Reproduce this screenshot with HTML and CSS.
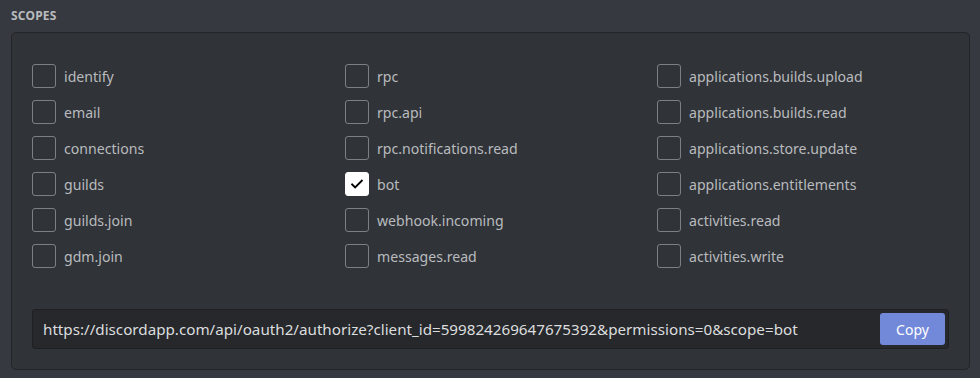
FILE: index.html
```html
<!DOCTYPE html>
<html lang="en">
<head>
    <meta charset="UTF-8">
    <title>OAuth2 Scopes</title>
    <link rel="stylesheet" href="styles.css">
</head>
<body>
    <div class="section">
        <h5 class="section-title">Scopes</h5>
        <div class="scopes-box">
            <div class="scopes-grid">
                <label class="scope"><span class="box"></span>identify</label>
                <label class="scope"><span class="box"></span>rpc</label>
                <label class="scope"><span class="box"></span>applications.builds.upload</label>
                <label class="scope"><span class="box"></span>email</label>
                <label class="scope"><span class="box"></span>rpc.api</label>
                <label class="scope"><span class="box"></span>applications.builds.read</label>
                <label class="scope"><span class="box"></span>connections</label>
                <label class="scope"><span class="box"></span>rpc.notifications.read</label>
                <label class="scope"><span class="box"></span>applications.store.update</label>
                <label class="scope"><span class="box"></span>guilds</label>
                <label class="scope"><span class="box checked">
                    <svg viewBox="0 0 24 24" width="18" height="18"><path d="M5.5 12.5l4 4 9-9" fill="none" stroke="#000" stroke-width="2.4" stroke-linecap="square"/></svg>
                </span>bot</label>
                <label class="scope"><span class="box"></span>applications.entitlements</label>
                <label class="scope"><span class="box"></span>guilds.join</label>
                <label class="scope"><span class="box"></span>webhook.incoming</label>
                <label class="scope"><span class="box"></span>activities.read</label>
                <label class="scope"><span class="box"></span>gdm.join</label>
                <label class="scope"><span class="box"></span>messages.read</label>
                <label class="scope"><span class="box"></span>activities.write</label>
            </div>
            <div class="url-field">
                <span class="url-text">https://discordapp.com/api/oauth2/authorize?client_id=599824269647675392&amp;permissions=0&amp;scope=bot</span>
                <button class="copy-btn">Copy</button>
            </div>
        </div>
    </div>
</body>
</html>
```

FILE: styles.css
```css
body {
    margin: 0;
    background-color: #36393f;
    font-family: 'Noto Sans', 'Open Sans', sans-serif;
}

.section {
    padding: 8px 10px 0 11px;
}

.section-title {
    margin: 0 0 9px;
    height: 15px;
    font-size: 12px;
    line-height: 15px;
    font-weight: bold;
    text-transform: uppercase;
    color: #b9bbbe;
    letter-spacing: 0.2px;
}

.scopes-box {
    background-color: #303338;
    border: 1px solid #232529;
    border-radius: 5px;
    padding: 31px 20px 19px 20px;
    height: 286px;
}

.scopes-grid {
    display: grid;
    grid-template-columns: 313px 312px 300px;
    grid-auto-rows: 36px;
}

.scope {
    display: flex;
    align-items: center;
    gap: 8px;
    height: 36px;
    font-size: 14.1px;
    color: #b9bbbe;
    margin-top: -6px;
}

.box {
    width: 22px;
    height: 22px;
    border: 1px solid #7c8086;
    border-radius: 3px;
    display: flex;
    align-items: center;
    justify-content: center;
    flex-shrink: 0;
}

.box.checked {
    background-color: #fff;
    border-color: #fff;
}

.url-field {
    margin-top: 29px;
    height: 38px;
    background-color: #26282c;
    border: 1px solid #1e2024;
    border-radius: 3px;
    display: flex;
    align-items: center;
    justify-content: space-between;
    padding: 0 4px 0 10px;
}

.url-text {
    color: #dcddde;
    font-size: 15.2px;
}

.copy-btn {
    width: 65px;
    height: 32px;
    background-color: #7289da;
    color: #fff;
    border: none;
    border-radius: 3px;
    font-family: inherit;
    font-size: 14px;
    margin-right: -1px;
}
```
